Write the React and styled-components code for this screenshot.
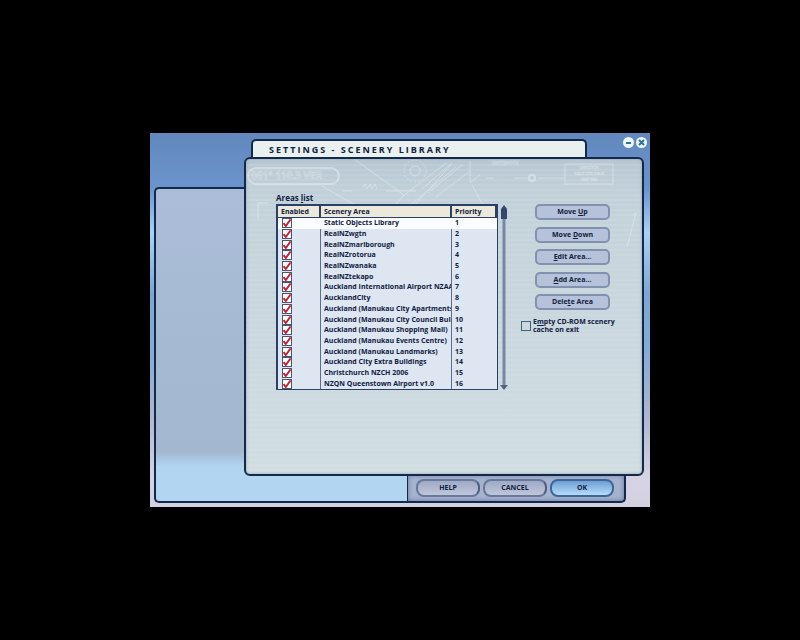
import React from 'react';
import styled, { createGlobalStyle, css } from 'styled-components';

const GlobalStyle = createGlobalStyle`
  *,
  *::before,
  *::after {
    box-sizing: border-box;
  }

  body {
    margin: 0;
    background: #000;
    font-family: 'Open Sans', 'Liberation Sans', sans-serif;
    font-size: 7px;
    font-weight: 700;
    line-height: 10px;
    color: #10203f;
  }

  button,
  input {
    margin: 0;
    padding: 0;
    font: inherit;
    color: inherit;
  }
`;

const Page = styled.div`
  display: flex;
  min-height: 100vh;
  padding: 133px 150px;
`;

const Window = styled.main`
  flex: 1;
  display: grid;
  grid-template-columns: 90px 163px 1fr 18px;
  grid-template-rows: 24px 31px 1fr 28px;
  padding: 0 6px 4px 4px;
  background: linear-gradient(
    180deg,
    #6288bd 0,
    #6a94cc 55px,
    #a8d2f4 100px,
    #7ea6d4 160px,
    #86abd6 220px,
    #aab6d0 280px,
    #d6d3e4 345px,
    #d3d0e0 100%
  );
`;

const TitleTab = styled.header`
  grid-area: 1 / 2 / 2 / 5;
  align-self: end;
  height: 18px;
  margin: 0 57px 0 7px;
  padding: 0 16px;
  border: 2px solid #14294a;
  border-bottom: 0;
  border-radius: 5px 5px 0 0;
  background: #e9f0ef;
`;

const Title = styled.h1`
  margin: 0;
  font-size: 9px;
  line-height: 18px;
  letter-spacing: 2px;
  text-transform: uppercase;
  white-space: nowrap;
`;

const WindowControls = styled.div`
  grid-area: 1 / 2 / 2 / 5;
  justify-self: end;
  display: flex;
  gap: 2px;
  margin-right: -3px;
  padding-top: 4px;
`;

const WindowButton = styled.button`
  width: 11px;
  height: 11px;
  border: 0;
  border-radius: 50%;
  background: #eef7fb;

  svg {
    display: block;
  }
`;

const Sidebar = styled.aside`
  grid-area: 3 / 1 / 5 / 3;
  margin-top: -1px;
  border: 2px solid #14294a;
  border-right: 0;
  border-radius: 5px 0 0 5px;
  background: linear-gradient(180deg, #abbdd8 0, #a3b7d0 84%, #b2d5f2 89%, #b2d5f2 100%);
`;

const Footer = styled.footer`
  grid-area: 4 / 3 / 5 / 4;
  display: flex;
  align-items: center;
  justify-content: flex-end;
  gap: 3px;
  padding: 0 10px 0 8px;
  border: solid #14294a;
  border-width: 0 2px 2px 1px;
  border-radius: 0 0 5px 0;
  background: #a6b3cf;
  box-shadow: inset 0 0 5px #64759b;
`;

const FooterButton = styled.button`
  flex: 1;
  height: 18px;
  border: 2px solid #68779b;
  border-right-color: #4c5d82;
  border-radius: 8px;
  background: linear-gradient(180deg, #9eaac6, #c0c6da);

  ${({ $primary }) =>
    $primary &&
    css`
      border-color: #3c659b;
      background: linear-gradient(180deg, #6f9ed2, #b5dcfa);
    `}
`;

const Panel = styled.section`
  grid-area: 2 / 2 / 4 / 5;
  z-index: 1;
  position: relative;
  display: flex;
  align-items: flex-start;
  margin-bottom: -1px;
  padding: 33px 23px 83px 30px;
  border: 2px solid #14294a;
  border-radius: 6px;
  background:
    repeating-linear-gradient(180deg, rgba(255, 255, 255, 0.07) 0 2px, transparent 2px 5px),
    linear-gradient(180deg, #b7c7d2 0, #c3d2da 40px, #cbd8df 60%, #d0dde1 100%);
  box-shadow: inset 0 0 3px #8fa3b5;
`;

const Chart = styled.svg`
  position: absolute;
  top: 0;
  left: 0;
  width: 395px;
  height: 90px;
  opacity: 0.35;
`;

const Areas = styled.div`
  position: relative;
  flex: 1;
`;

const AreasLabel = styled.h2`
  margin: 0;
  font-size: 8px;
  line-height: 12px;
`;

const ListBox = styled.div`
  display: flex;
  gap: 2px;
`;

const AreasTable = styled.table`
  width: 100%;
  height: 186px;
  table-layout: fixed;
  border-collapse: separate;
  border-spacing: 0;
  border: solid #2a4066;
  border-width: 1px 1px 1px 2px;
  background: #dde6f1;
`;

const HeadCell = styled.th`
  width: ${({ $width }) => $width};
  height: 13px;
  padding: 0 3px;
  border: solid #2a4066;
  border-width: 1px 2px 1px 0;
  background: #ece9dc;
  text-align: left;
`;

const Row = styled.tr`
  background: ${({ $selected }) => ($selected ? '#fbfcff' : 'transparent')};

  td {
    border-color: ${({ $selected }) => ($selected ? 'transparent' : '#5a6d93')};
  }
`;

const Cell = styled.td`
  padding: 0 0 0 3px;
  border: 0 solid;
  border-right-width: ${({ $last }) => ($last ? 0 : '1px')};
`;

const AreaName = styled.div`
  overflow: hidden;
  white-space: nowrap;
`;

const Tick = styled.input`
  appearance: none;
  display: block;
  width: 10px;
  height: 10px;
  margin-left: 1px;
  border: 1px solid #4b5573;
  background: #fff;

  &:checked {
    background: #fff url("data:image/svg+xml,%3Csvg xmlns='http://www.w3.org/2000/svg' viewBox='0 0 8 8'%3E%3Cpath d='M.5 4l2.3 3L7.6.4' fill='none' stroke='%23c4202c' stroke-width='1.9'/%3E%3C/svg%3E");
  }
`;

const ScrollBar = styled.svg`
  flex: none;
  width: 8px;
  height: 186px;
`;

const Actions = styled.div`
  position: relative;
  width: 98px;
  margin: 12px 0 0 13px;
`;

const ButtonStack = styled.div`
  display: flex;
  flex-direction: column;
  justify-content: space-between;
  height: 106px;
  padding: 0 9px 0 14px;
`;

const ActionButton = styled.button`
  height: 16px;
  border: 2px solid #8291b0;
  border-radius: 5px;
  background: #b6c2d9;
`;

const CacheOption = styled.label`
  display: flex;
  align-items: center;
  gap: 2px;
  margin-top: 8px;
  line-height: 8px;
  white-space: nowrap;
`;

const CacheBox = styled.input`
  appearance: none;
  flex: none;
  width: 10px;
  height: 10px;
  border: 1px solid #3a6480;
`;

const areas = [
  'Static Objects Library',
  'RealNZwgtn',
  'RealNZmarlborough',
  'RealNZrotorua',
  'RealNZwanaka',
  'RealNZtekapo',
  'Auckland International Airport NZAA',
  'AucklandCity',
  'Auckland (Manukau City Apartments',
  'Auckland (Manukau City Council Buil',
  'Auckland (Manukau Shopping Mall)',
  'Auckland (Manukau Events Centre)',
  'Auckland (Manukau Landmarks)',
  'Auckland City Extra Buildings',
  'Christchurch NZCH 2006',
  'NZQN Queenstown Airport v1.0',
];

// Faint approach chart printed on the panel
const ApproachChart = () => (
  <Chart viewBox="0 0 395 90" fill="none" stroke="#fff" aria-hidden="true">
    <rect x="2" y="9" width="91" height="16" rx="8" strokeWidth="2" />
    <text x="5" y="20" fontSize="10" strokeWidth="0.6">
      061° 110.3 VER
    </text>
    <path d="M76 27l42 24M108 0l50 36M200 4l-44 34-10 12M210 8l-48 40M165 50l40-44" />
    <path d="M96 32h10M116 29l3-4 2 5 3-5 2 5 3-5 2 5M140 32h30" />
    <circle cx="169" cy="12" r="5" />
    <circle cx="169" cy="12" r="11" strokeDasharray="2 2" />
    <path d="M176 30l30-26M182 34l34-28M190 38l34-26M224 2v22l10-8M226 26l12 22M240 19h8M268 19h14M292 19h26" />
    <text x="246" y="6" fontSize="5" strokeWidth="0.4">HOTSPOTS</text>
    <circle cx="286" cy="19" r="3" strokeWidth="2" />
    <rect x="319" y="5" width="48" height="20" />
    <g fontSize="4" strokeWidth="0.4" textAnchor="middle">
      <text x="343" y="10">CHRISTCH</text>
      <text x="343" y="16">122.7 CTR 118.5</text>
      <text x="343" y="22">HGT 700</text>
    </g>
    <path d="M12 44v16M12 44h10M390 54l-9 34M386 56l4-2" />
  </Chart>
);

const App = () => (
  <>
    <GlobalStyle />
    <Page>
      <Window>
        <TitleTab>
          <Title>Settings - Scenery Library</Title>
        </TitleTab>
        <WindowControls>
          <WindowButton aria-label="Minimize">
            <svg width="11" height="11" viewBox="0 0 11 11">
              <path d="M3 6h5" stroke="#2c7499" strokeWidth="2" />
            </svg>
          </WindowButton>
          <WindowButton aria-label="Close">
            <svg width="11" height="11" viewBox="0 0 11 11">
              <path d="M3 3l5 5M8 3l-5 5" stroke="#2c7499" strokeWidth="2" />
            </svg>
          </WindowButton>
        </WindowControls>
        <Sidebar />
        <Panel>
          <ApproachChart />
          <Areas>
            <AreasLabel>
              Areas <u>l</u>ist
            </AreasLabel>
            <ListBox>
              <AreasTable>
                <thead>
                  <tr>
                    <HeadCell $width="43px">Enabled</HeadCell>
                    <HeadCell>Scenery Area</HeadCell>
                    <HeadCell $width="45px">Priority</HeadCell>
                  </tr>
                </thead>
                <tbody>
                  {areas.map((area, index) => (
                    <Row key={area} $selected={index === 0}>
                      <Cell>
                        <Tick type="checkbox" defaultChecked aria-label={area} />
                      </Cell>
                      <Cell>
                        <AreaName>{area}</AreaName>
                      </Cell>
                      <Cell $last>{index + 1}</Cell>
                    </Row>
                  ))}
                </tbody>
              </AreasTable>
              <ScrollBar viewBox="0 0 8 186">
                <path d="M4 4v178" stroke="#7886a6" strokeWidth="3" />
                <path d="M4 1l3 4v10h-6v-10z" fill="#35466f" />
                <path d="M0 181h8l-4 5z" fill="#536287" />
              </ScrollBar>
            </ListBox>
          </Areas>
          <Actions>
            <ButtonStack>
              <ActionButton>Move <u>U</u>p</ActionButton>
              <ActionButton>Move <u>D</u>own</ActionButton>
              <ActionButton><u>E</u>dit Area...</ActionButton>
              <ActionButton><u>A</u>dd Area...</ActionButton>
              <ActionButton>Dele<u>t</u>e Area</ActionButton>
            </ButtonStack>
            <CacheOption>
              <CacheBox type="checkbox" />
              <span>
                E<u>m</u>pty CD-ROM scenery
                <br />
                cache on exit
              </span>
            </CacheOption>
          </Actions>
        </Panel>
        <Footer>
          <FooterButton>HELP</FooterButton>
          <FooterButton>CANCEL</FooterButton>
          <FooterButton $primary>OK</FooterButton>
        </Footer>
      </Window>
    </Page>
  </>
);

export default App;
